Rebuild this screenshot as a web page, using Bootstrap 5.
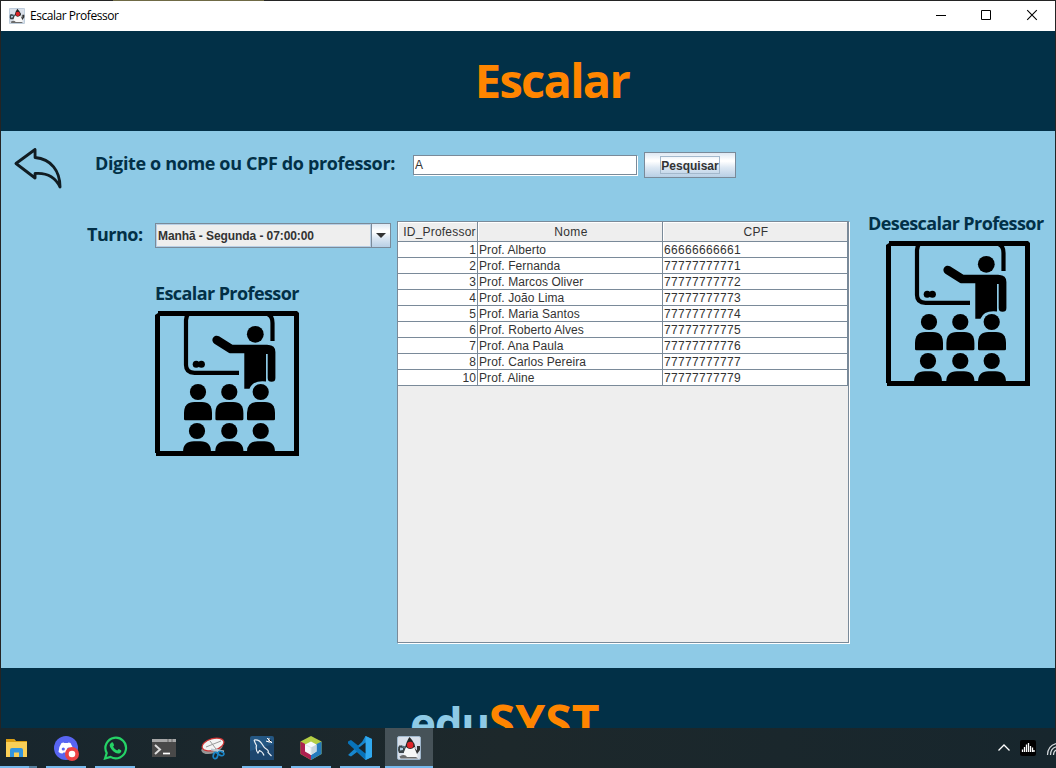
<!DOCTYPE html>
<html lang="pt-BR">
<head>
<meta charset="utf-8">
<title>Escalar Professor</title>
<meta name="viewport" content="width=device-width, initial-scale=1">
<link href="https://cdn.jsdelivr.net/npm/bootstrap@5.3.0/dist/css/bootstrap.min.css" rel="stylesheet">
<style>
:root{--navy:#023047;--sky:#8ecae6;--orange:#ff8500;--metal:#7a8a99}
body{width:1056px;height:768px;background:#242424;font-family:"Open Sans","Noto Sans",sans-serif;line-height:1;color:#000}
.screen{height:768px}
.desktop-strip{height:1px;background:linear-gradient(90deg,#242424 113px,#6f6a45 113px 264px,#242424 264px)}
.win{margin:0 1px;height:727px}
.titlebar{height:30px;padding-left:8px}
.win-title{font-size:12px;letter-spacing:-.46px;margin-left:5px}
.win-btn{width:45px;height:30px}
.banner{height:100px;background:var(--navy)}
.banner h1{font-size:47px;letter-spacing:-1.7px;color:var(--orange);margin:0 0 1px 48px}
.content{height:537px;background:var(--sky)}
.search-row{height:90px;padding:17px 0 0 13px}
.back{width:48px;height:41px}
.form-title{font-size:18px;font-weight:700;color:var(--navy);white-space:nowrap;line-height:24px;letter-spacing:-.59px}
.lbl-search{width:318px;margin:3px 0 0 33px;letter-spacing:-.36px}
.field{width:224px;height:20px;margin-top:7px;border:1px solid var(--metal);box-shadow:1px 1px 0 #fff;border-radius:0;padding:0 0 0 1px;background:#fff;font:12px "Liberation Sans",Arial,sans-serif;color:#333;line-height:20px}
.metal-btn{width:92px;height:26px;margin:4px 0 0 7px;border:1px solid var(--metal);border-radius:0;padding:0;background:linear-gradient(#dde8f3 0,#fff 30%,#fff 35%,#dde8f3 60%,#b8cfe5 100%);font:bold 12px "Liberation Sans",Arial,sans-serif;color:#333}
.metal-btn span{display:block;width:60px;height:18px;line-height:18px;margin:0 auto;border:1px solid #a3b8cc}
.left-col{width:390px}
.lbl-turno{width:68px;margin-left:86px;line-height:26px;letter-spacing:-.5px}
.combo{width:236px;height:25px;margin-top:2px;border:1px solid var(--metal);background:#eee;font:bold 12px "Liberation Sans",Arial,sans-serif;color:#333}
.combo-text{border:1px solid #b8cfe5;line-height:22px;padding-left:1px;letter-spacing:-.08px}
.combo-arrow{width:19px;border-left:1px solid var(--metal);background:linear-gradient(#dde8f3 0,#fff 30%,#fff 35%,#dde8f3 60%,#b8cfe5 100%)}
.escalar{width:144px;margin:33px 0 0 154px}
.class-pic{display:block;width:144px;height:145px;margin-top:6px}
.table-pane{width:452px;height:422px;margin-left:6px;border:1px solid var(--metal);box-shadow:1px 1px 0 #fff;background:#eee}
.grid{table-layout:fixed;width:450px;margin:0;border-collapse:separate;border-spacing:0;font:12px "Liberation Sans",Arial,sans-serif;color:#333}
.grid th{height:20px;padding:2px 0 0 2px;font-weight:400;text-align:center;background:#eee;border-right:1px solid var(--metal);border-bottom:1px solid var(--metal);box-shadow:inset 1px 1px 0 #fff;line-height:17px;letter-spacing:.4px;white-space:nowrap}
.grid th:first-child{letter-spacing:.2px;padding-left:4px}
.grid td{height:16px;padding:1px 1px 0;line-height:14px;background:#fff;border-right:1px solid var(--metal);border-bottom:1px solid var(--metal);white-space:nowrap;letter-spacing:.08px}
.grid td:first-child{text-align:right}
.grid td:last-child{letter-spacing:.33px}
.right-col{width:187px;margin:-10px 0 0 19px}
.pic-des{margin-left:18px}
.foot{height:60px;background:var(--navy);overflow:hidden;padding:28px 0 0 409px;font-size:48px;font-weight:700;line-height:52px;white-space:nowrap}
.foot .edu{color:var(--sky);font-size:44px;letter-spacing:-1.3px}
.foot .syst{color:var(--orange)}
.taskbar{height:40px;background:linear-gradient(90deg,#18262d,#1d282b 48%,#17262d)}
.task{width:40px;height:40px;margin-right:9px;border-bottom:2px solid #76b9ed;padding-top:8px;text-align:center}
.task svg{display:block;margin:0 auto}
.task.idle{border-color:transparent}
.task.first{width:37px;padding-right:4px;border-image:linear-gradient(90deg,#76b9ed 28px,#56809f 28px) 2}
.task.active{width:48px;background:#465258;margin-left:-4px}
</style>
</head>
<body>
<svg width="0" height="0" class="position-absolute" aria-hidden="true">
  <defs>
    <symbol id="classroom" viewBox="0 0 144 145">
      <path d="M3 0H142L144 2V145H1V142H0V4L3 2Z M5 5V140H139V5Z" fill-rule="evenodd"/>
      <g fill="none" stroke="#000" stroke-width="4.2">
        <path d="M33 3Q31.500 5 31 9V54Q31 61.800 39.500 61.800H84"/>
        <path d="M113 3.500Q117.500 5 117.500 12V30"/>
      </g>
      <circle cx="41.200" cy="53.300" r="3.500"/><circle cx="46.400" cy="53.300" r="3.500"/>
      <circle cx="100.300" cy="23.300" r="8.400"/>
      <path d="M61.700 29L76 38H112" fill="none" stroke="#000" stroke-width="8.600" stroke-linecap="round" stroke-linejoin="round"/>
      <path d="M89.300 34H113Q120.400 34 120.400 41V67A3.800 3.800 0 0 1 112.700 67V43H111V70.500Q98 69 94.500 77.700H89.300Z"/>
      <circle cx="43" cy="81" r="8.100"/><circle cx="74.300" cy="81" r="8.100"/><circle cx="105.700" cy="81" r="8.100"/>
      <path id="torso" d="M29 108V102Q29 91 39.500 91H47Q57 91 57 102V108Q57 109.300 55.500 109.300H30.500Q29 109.300 29 108Z"/>
      <use href="#torso" x="31.400"/><use href="#torso" x="63"/>
      <circle cx="42" cy="120" r="8.100"/><circle cx="74.300" cy="120" r="8.100"/><circle cx="105.700" cy="120" r="8.100"/>
      <path d="M28 141Q28 130.300 39 130.300H45.500Q56 130.300 56 141ZM60.200 141Q60.200 130.300 71 130.300H78Q88.500 130.300 88.500 141ZM92 141Q92 130.300 102.500 130.300H109.500Q120 130.300 120 141Z"/>
    </symbol>
    <symbol id="duke" viewBox="0 0 24 24">
      <rect x=".5" y=".5" width="23" height="23" rx="1.500" fill="#d9e0ea" stroke="#a0b7cc"/>
      <path d="M1 11L5 9.500L9 10.500V15L2 16Z" fill="#527180"/>
      <path d="M2 9.500H5V11L9 13L7 17H2L1 14Z" fill="#3a4347"/>
      <path d="M3 11.500L6 12V14L3 14.500Z" fill="#a9cbe0"/>
      <path d="M12.500 1Q15.500 4 17.500 8L18.500 13Q13 15 8 12Q9.500 5 12.500 1Z" fill="#252525"/>
      <path d="M9 11Q13 15 17.500 11L19.500 14L20.500 21Q13 24 6 21Q7 15 9 11Z" fill="#f7f7f7"/>
      <path d="M17.500 12L20 14.500V10H23V14L20 18Z" fill="#333"/>
      <path d="M2.500 20.500Q8 17.500 10 21H19L21 22.500H3.500Z" fill="#6c6c6c"/>
      <circle cx="13.200" cy="9" r="3.200" fill="#df2428"/>
    </symbol>
  </defs>
</svg>
<div class="screen d-flex flex-column overflow-hidden">
  <div class="desktop-strip"></div>
  <div class="win">
    <header class="titlebar d-flex align-items-center bg-white">
      <svg width="16" height="16"><use href="#duke"/></svg>
      <span class="win-title">Escalar Professor</span>
      <div class="d-flex ms-auto">
        <svg class="win-btn" viewBox="0 0 45 30"><path d="M16 14.500H26" stroke="#000"/></svg>
        <svg class="win-btn" viewBox="0 0 45 30"><path d="M16.500 9.500H25.500V18.500H16.500Z" fill="none" stroke="#000"/></svg>
        <svg class="win-btn" viewBox="0 0 45 30"><path d="M17.200 9.200L26.800 18.800M26.800 9.200L17.200 18.800" stroke="#000" stroke-width="1.100"/></svg>
      </div>
    </header>
    <div class="banner d-flex align-items-center justify-content-center"><h1 class="fw-bold">Escalar</h1></div>
    <main class="content">
      <div class="search-row d-flex align-items-start">
        <svg class="back" viewBox="0 0 49 41" preserveAspectRatio="none"><path d="M2 15.500L21.500 1.500V9.500C38 11 47 23 47 39C42 29 34 24.500 21.500 25.500V30Z" fill="none" stroke="#111c22" stroke-width="2.900" stroke-linejoin="round"/></svg>
        <label class="form-title lbl-search" for="q">Digite o nome ou CPF do professor:</label>
        <input id="q" class="field" value="A">
        <button class="metal-btn"><span>Pesquisar</span></button>
      </div>
      <div class="d-flex align-items-start">
        <section class="left-col">
          <div class="d-flex align-items-start">
            <label class="form-title lbl-turno">Turno:</label>
            <div class="combo d-flex">
              <span class="combo-text flex-grow-1">Manhã - Segunda - 07:00:00</span>
              <span class="combo-arrow d-flex align-items-center justify-content-center"><svg width="10" height="5"><path d="M0 0H10L5 5Z" fill="#333"/></svg></span>
            </div>
          </div>
          <div class="escalar">
            <div class="form-title">Escalar Professor</div>
            <svg class="class-pic"><use href="#classroom"/></svg>
          </div>
        </section>
        <div class="table-pane">
          <table class="grid">
            <colgroup><col style="width:80px"><col style="width:185px"><col style="width:185px"></colgroup>
            <thead><tr><th>ID_Professor</th><th>Nome</th><th>CPF</th></tr></thead>
            <tbody>
              <tr><td>1</td><td>Prof. Alberto</td><td>66666666661</td></tr>
              <tr><td>2</td><td>Prof. Fernanda</td><td>77777777771</td></tr>
              <tr><td>3</td><td>Prof. Marcos Oliver</td><td>77777777772</td></tr>
              <tr><td>4</td><td>Prof. João Lima</td><td>77777777773</td></tr>
              <tr><td>5</td><td>Prof. Maria Santos</td><td>77777777774</td></tr>
              <tr><td>6</td><td>Prof. Roberto Alves</td><td>77777777775</td></tr>
              <tr><td>7</td><td>Prof. Ana Paula</td><td>77777777776</td></tr>
              <tr><td>8</td><td>Prof. Carlos Pereira</td><td>77777777777</td></tr>
              <tr><td>10</td><td>Prof. Aline</td><td>77777777779</td></tr>
            </tbody>
          </table>
        </div>
        <section class="right-col">
          <div class="form-title">Desescalar Professor</div>
          <svg class="class-pic pic-des"><use href="#classroom"/></svg>
        </section>
      </div>
    </main>
    <footer class="foot"><span class="edu">edu</span><span class="syst">SYST</span></footer>
  </div>
  <nav class="taskbar d-flex">
    <div class="task first"><svg width="24" height="24" viewBox="0 0 24 24"><path d="M1 3H9L11 5H22V21H1Z" fill="#f9cf57"/><path d="M1 3H9L10 5H22V6H1Z" fill="#d99d13"/><path d="M5 21V14Q5 12 7 12H16Q18 12 18 14V21H14V16.500H9V21Z" fill="#3295df"/></svg></div>
    <div class="task"><svg width="26" height="26" viewBox="0 0 26 26"><circle cx="13" cy="12" r="12" fill="#5865f2"/><path d="M8.500 7Q11 6 11.300 7H14.700Q15.500 6 17.500 7Q20.500 11.500 20.500 16Q18 18 16.500 17.500L16 16.500H10.500L9.500 17.500Q7.500 17.500 5.500 16Q5.500 11 8.500 7Z" fill="#fff"/><circle cx="10.300" cy="13" r="1.600" fill="#5865f2"/><circle cx="15.700" cy="13" r="1.600" fill="#5865f2"/><circle cx="19" cy="18" r="7" fill="#ed4245"/><circle cx="19" cy="18" r="3.300" fill="#fff"/></svg></div>
    <div class="task"><svg width="25" height="24" viewBox="0 0 24 24"><path d="M1.500 22.500L3.200 17A10.300 10.300 0 1 1 7 20.900Z" fill="none" stroke="#25d366" stroke-width="2.200"/><path d="M8 6.500Q9.200 5.800 9.700 7L10.600 9.200L9.600 10.700Q11 13.400 13.700 14.500L15.200 13L17.600 14.200Q18.500 15 17 16.700Q14 19 9.700 15.200Q5 10.500 6.500 8Z" fill="#25d366"/></svg></div>
    <div class="task idle"><svg width="24" height="24" viewBox="0 0 24 24"><path d="M0 3H24V21H0Z" fill="#494949"/><path d="M0 3H24V6H0Z" fill="#a7a7a7"/><path d="M16 3V6M20 3V6" stroke="#666"/><path d="M3 9L8 13.500L3 18" fill="none" stroke="#ddd" stroke-width="2"/><path d="M11 17.500H18" stroke="#fff" stroke-width="1.700"/></svg></div>
    <div class="task idle"><svg width="24" height="24" viewBox="0 0 24 24"><ellipse cx="11" cy="12" rx="11" ry="5.500" transform="rotate(-16 11 12)" fill="#969696"/><ellipse cx="12" cy="8.500" rx="11.200" ry="5.800" transform="rotate(-16 12 8.500)" fill="#f4f4f4" stroke="#cf3434" stroke-width="1.200"/><path d="M5 11L20 5M9 5L18 17" stroke="#999"/><path d="M10 13.500L23 15.500M15 17L17 13" stroke="#bbc9d2" stroke-width="2"/><ellipse cx="14.500" cy="19.500" rx="2.200" ry="3.200" transform="rotate(15 14.500 19.500)" fill="none" stroke="#1b84c4" stroke-width="1.700"/><ellipse cx="20" cy="17.500" rx="3" ry="2" transform="rotate(20 20 17.500)" fill="none" stroke="#1b84c4" stroke-width="1.700"/></svg></div>
    <div class="task"><svg width="24" height="24" viewBox="0 0 24 24"><rect width="24" height="24" rx="2" fill="#245783"/><path d="M0 15L24 8V24H0Z" fill="#1d466e"/><path d="M4 4Q9 3 12 8Q14 12 17 13.500Q19 15 18 16.500L21.500 20M4 4Q5 7 6.500 9.500Q5.500 14 8 17L9.500 14.500Q13 16 14 19.500" fill="none" stroke="#e8eef4" stroke-width="1.200"/><path d="M17 2L22 7M19 2V6H22M16 5L19 6" stroke="#fff" stroke-width="1"/></svg></div>
    <div class="task"><svg width="24" height="24" viewBox="0 0 24 24"><path d="M12 0L22.500 5.500V18L12 24L1.500 18V5.500Z" fill="#b4cf45"/><path d="M1.500 5.500L12 11V24L1.500 18Z" fill="#ae2150"/><path d="M22.500 5.500L12 11V24L22.500 18Z" fill="#257bbd"/><path d="M12 5.500L17.500 8.500V15.500L12 19L6 15.500V8.500Z" fill="#f7fafc"/><path d="M12 11.500L17.500 8.500V15.500L12 19Z" fill="#c7d6df"/><path d="M6 8.500L12 11.500V19" fill="none" stroke="#dfe8ec"/></svg></div>
    <div class="task"><svg width="24" height="24" viewBox="0 0 24 24"><path d="M17.500 0L24 3V21L17.500 24L9 16L3 20.500L0 19L14 6Z" fill="#1787cf"/><path d="M0 5.500L3 4L18 15.800V24L0 7.500Z" fill="#0873b9"/><path d="M17.500 0L24 3V21L17.500 24Z" fill="#30a9ef"/><path d="M17.500 6.500V17.500L10.500 12Z" fill="#18262d"/></svg></div>
    <div class="task active"><svg width="24" height="24"><use href="#duke"/></svg></div>
    <div class="tray ms-auto d-flex align-items-center">
      <svg width="58" height="40" viewBox="0 0 58 40"><path d="M0.500 22.500L6 17L11.500 22.500" fill="none" stroke="#fff" stroke-width="1.300"/><rect x="22" y="12" width="16" height="16" rx="2" fill="#000"/><path d="M24.500 24V21.500M26.500 24V19M28.500 24V16.500M30.500 24V15M32.500 24V18M34.500 24V19.500M36 24V22" stroke="#fff" stroke-width="1.300"/><g fill="none" stroke="#d5dadd" stroke-width="1.200"><path d="M49.500 27Q49.500 18 58 15.500M52.500 27Q52.500 20.500 58 18.800M55.500 27Q55.500 23.500 58 22"/></g></svg>
    </div>
  </nav>
</div>
<script src="https://cdn.jsdelivr.net/npm/bootstrap@5.3.0/dist/js/bootstrap.bundle.min.js"></script>
</body>
</html>
